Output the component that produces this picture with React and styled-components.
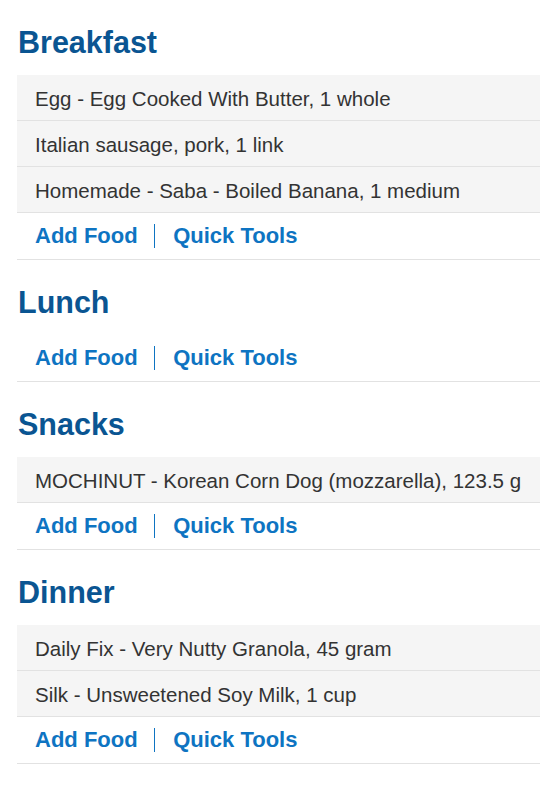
import React from "react";
import styled, { createGlobalStyle } from "styled-components";

const Global = createGlobalStyle`
  html, body { margin: 0; padding: 0; background: #fff; }
  body { font-family: "Liberation Sans", Arial, sans-serif; overflow-x: hidden; }
`;

const Page = styled.div`
  padding-left: 17px;
  width: 523px;
`;

const Section = styled.section`
  display: flex;
  flex-direction: column;
`;

const Heading = styled.h2`
  margin: 0;
  padding: 24px 0 15px 1px;
  font-size: 30.5px;
  line-height: 36px;
  font-weight: 700;
  color: #0a5592;
`;

const List = styled.ul`
  list-style: none;
  margin: 0;
  padding: 0;
`;

const FoodRow = styled.li`
  height: 45px;
  line-height: 47px;
  padding-left: 18px;
  background: #f5f5f5;
  border-bottom: 1px solid #e2e2e2;
  font-size: 20.5px;
  color: #333;
  white-space: nowrap;
  overflow: hidden;
`;

const Actions = styled.div`
  display: flex;
  align-items: center;
  height: 46px;
  padding-left: 18px;
  border-bottom: 1px solid #e2e2e2;
  background: #fff;
`;

const ActionLink = styled.a`
  font-size: 22px;
  font-weight: 700;
  color: #0e74c2;
  text-decoration: none;
  line-height: 46px;
`;

const Divider = styled.span`
  width: 1.5px;
  height: 24px;
  background: #0e74c2;
  margin: 0 18px 0 16px;
`;

const meals = [
  {
    name: "Breakfast",
    foods: [
      "Egg - Egg Cooked With Butter, 1 whole",
      "Italian sausage, pork, 1 link",
      "Homemade - Saba - Boiled Banana, 1 medium",
    ],
  },
  { name: "Lunch", foods: [] },
  {
    name: "Snacks",
    foods: ["MOCHINUT - Korean Corn Dog (mozzarella), 123.5 g"],
  },
  {
    name: "Dinner",
    foods: [
      "Daily Fix - Very Nutty Granola, 45 gram",
      "Silk - Unsweetened Soy Milk, 1 cup",
    ],
  },
];

export default function App() {
  return (
    <>
      <Global />
      <Page>
        {meals.map((m) => (
          <Section key={m.name}>
            <Heading>{m.name}</Heading>
            <List>
              {m.foods.map((f) => (
                <FoodRow key={f}>{f}</FoodRow>
              ))}
            </List>
            <Actions>
              <ActionLink href="#">Add Food</ActionLink>
              <Divider />
              <ActionLink href="#">Quick Tools</ActionLink>
            </Actions>
          </Section>
        ))}
      </Page>
    </>
  );
}
